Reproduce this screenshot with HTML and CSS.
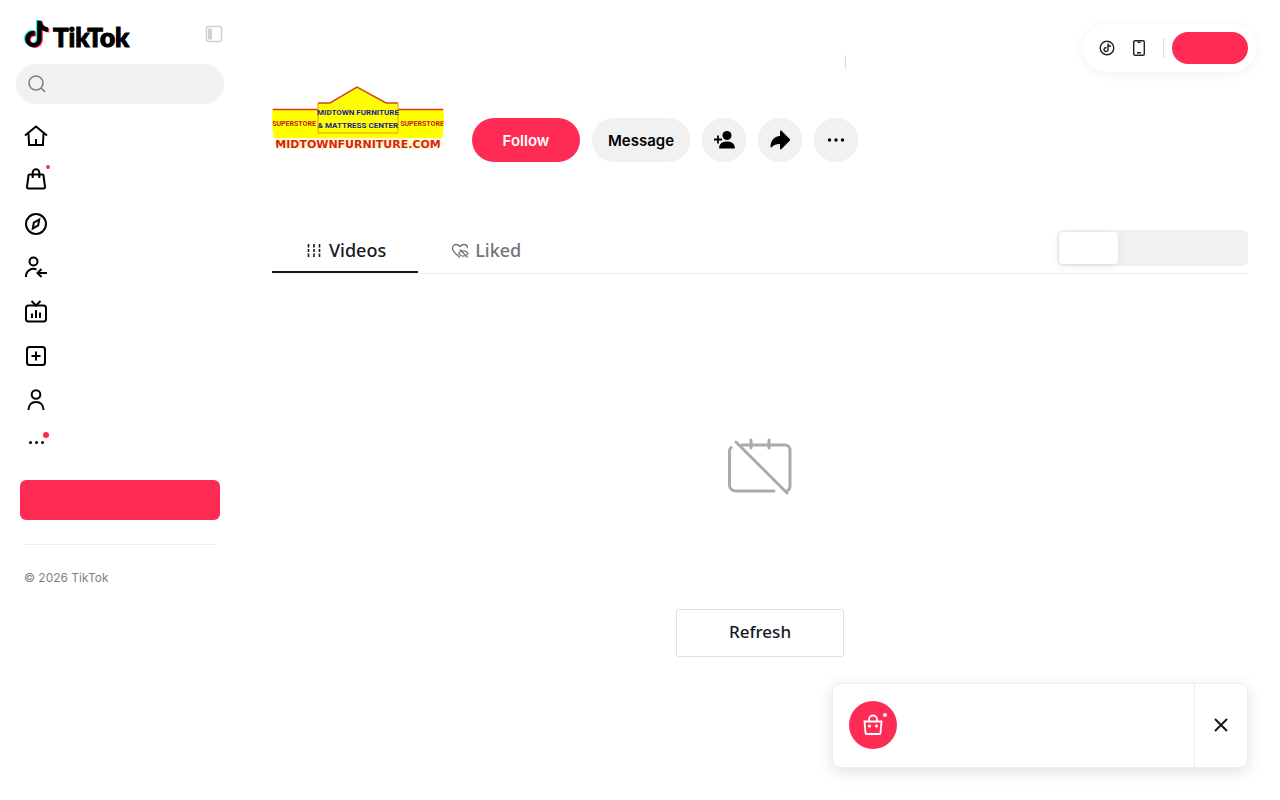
FILE: index.html
```html
<!doctype html>
<html lang="en">

<head>
    <meta charset="UTF-8" />
    <meta name="viewport" content="width=device-width, initial-scale=1.0" />
    <title>Midtown Furniture | TikTok</title>
    <link rel="stylesheet" href="styles.css">
</head>

<body>
    <div class="page">
        <aside class="sidebar">
            <div class="sidebar-top">
                <a class="logo" href="#" aria-label="TikTok">
                    <svg width="27" height="30" viewBox="0 0 27 30">
                        <defs>
                            <path id="note" d="M12.525.02c1.310-.02 2.610-.01 3.910-.02.080 1.530.630 3.090 1.750 4.170 1.120 1.110 2.700 1.620 4.240 1.790v4.030c-1.440-.05-2.890-.35-4.200-.97-.57-.26-1.100-.59-1.620-.93-.01 2.920.010 5.840-.02 8.750-.08 1.400-.54 2.790-1.350 3.940-1.310 1.920-3.580 3.170-5.910 3.210-1.430.080-2.860-.31-4.080-1.030-2.020-1.190-3.440-3.370-3.650-5.710-.02-.5-.03-1-.01-1.490.180-1.900 1.120-3.720 2.580-4.960 1.660-1.440 3.980-2.130 6.150-1.720.020 1.480-.04 2.960-.04 4.440-.99-.32-2.150-.23-3.020.370-.63.410-1.110 1.040-1.360 1.750-.21.510-.15 1.070-.14 1.610.240 1.640 1.820 3.020 3.500 2.870 1.120-.01 2.190-.66 2.770-1.610.190-.33.400-.67.410-1.060.100-1.790.060-3.570.070-5.360.010-4.030-.01-8.050.020-12.070z" />
                        </defs>
                        <use href="#note" fill="#25f4ee" transform="translate(-1.800 1) scale(1.100)" />
                        <use href="#note" fill="#fe2c55" transform="translate(.6 2.600) scale(1.100)" />
                        <use href="#note" fill="#000" transform="translate(-.6 1.800) scale(1.100)" />
                    </svg>
                    <span class="logo-text">TikT<span class="logo-o">o</span>k</span>
                </a>
                <button class="collapse" aria-label="Collapse sidebar">
                    <svg width="18" height="18" viewBox="0 0 18 18" fill="none" stroke="#d0d0d2">
                        <rect x="1.500" y="1.500" width="15" height="15" rx="2" stroke-width="1.500" />
                        <rect x="3" y="3.500" width="4" height="11" rx="1" fill="#d0d0d2" stroke="none" />
                    </svg>
                </button>
            </div>
            <label class="search">
                <svg width="20" height="20" viewBox="0 0 20 20" fill="none" stroke="#7f7f80" stroke-width="1.600">
                    <circle cx="9" cy="9" r="7" />
                    <path d="M14 14l4 4" />
                </svg>
                <input class="search-input" type="search" aria-label="Search">
            </label>
            <nav class="nav">
                <a class="nav-item" href="#" aria-label="For You">
                    <svg class="icon" viewBox="0 0 24 24">
                        <path d="M1 11.500L12 2.500l11 9M4.500 9.500l.6 11.500h13.800l.6-11.500M12 15v6" />
                    </svg>
                </a>
                <a class="nav-item" href="#" aria-label="Shop">
                    <svg class="icon" viewBox="0 0 24 24">
                        <path d="M5.500 6.500h13a1 1 0 0 1 1 1l1.500 11.500a1.500 1.500 0 0 1-1.500 1.500h-15A1.500 1.500 0 0 1 3 19L4.500 7.500a1 1 0 0 1 1-1zM8.700 10V4.500a3.300 3.300 0 0 1 6.600 0V10" />
                    </svg>
                    <span class="dot dot-shop"></span>
                </a>
                <a class="nav-item" href="#" aria-label="Explore">
                    <svg class="icon" viewBox="0 0 24 24">
                        <circle cx="12" cy="12" r="10" />
                        <path d="M15.200 7.500l-5.400 3.200-1 5.800 5.400-3.200z" />
                    </svg>
                </a>
                <a class="nav-item" href="#" aria-label="Following">
                    <svg class="icon" viewBox="0 0 24 24">
                        <circle cx="9.500" cy="5.500" r="4" />
                        <path d="M2 21v-.5a7.500 7.500 0 0 1 10.500-7M23 17H14M17.500 13l-4 4 4 4" />
                    </svg>
                </a>
                <a class="nav-item" href="#" aria-label="LIVE">
                    <svg class="icon" viewBox="0 0 24 24">
                        <rect x="2" y="5.500" width="20" height="16" rx="2.500" />
                        <path d="M7.500 1l4.500 4.500L16.500 1M8 13.500V18M12 10v8M16 12.500V18" />
                    </svg>
                </a>
                <a class="nav-item" href="#" aria-label="Upload">
                    <svg class="icon" viewBox="0 0 24 24">
                        <rect x="3" y="3" width="18" height="18" rx="2.500" />
                        <path d="M12 7.500v9M7.500 12h9" />
                    </svg>
                </a>
                <a class="nav-item" href="#" aria-label="Profile">
                    <svg class="icon" viewBox="0 0 24 24">
                        <circle cx="12" cy="6.500" r="4.300" />
                        <path d="M4.500 22c0-5 3-8 7.500-8s7.500 3 7.500 8" />
                    </svg>
                </a>
                <button class="nav-item nav-more" aria-label="More">
                    <svg class="icon icon-solid" viewBox="0 0 24 24">
                        <circle cx="6.500" cy="12.500" r="1.500" />
                        <circle cx="12.500" cy="12.500" r="1.500" />
                        <circle cx="18.500" cy="12.500" r="1.500" />
                    </svg>
                    <span class="dot dot-more"></span>
                </button>
            </nav>
            <button class="login" aria-label="Log in"></button>
            <footer class="copyright">© 2026 TikTok</footer>
        </aside>

        <main class="main">
            <header class="profile">
                <svg class="avatar" viewBox="0 0 172 172" role="img" aria-label="Midtown Furniture Superstore">
                    <defs>
                        <clipPath id="round">
                            <circle cx="86" cy="88" r="86" />
                        </clipPath>
                    </defs>
                    <g clip-path="url(#round)">
                        <rect y="77" width="172" height="29" fill="#ff0" />
                        <rect y="106" width="172" height="11" fill="#fffbd0" />
                        <path d="M0 77.500h46M126 77.500h46" stroke="#e0331b" stroke-width="1.500" />
                        <path d="M46 101V71h12l27-16 29 16h12v30z" fill="#ff0" />
                        <path d="M46 71h12l27-16 29 16h12" fill="none" stroke="#d8402c" stroke-width="1.500" />
                        <path d="M46 71v30h80V71" fill="none" stroke="#dfa000" />
                        <g text-anchor="middle">
                            <text class="sign sign-name" x="86" y="83">MIDTOWN FURNITURE</text>
                            <text class="sign sign-name" x="86" y="96">&amp; MATTRESS CENTER</text>
                            <text class="sign sign-side" x="22" y="94">SUPERSTORE</text>
                            <text class="sign sign-side" x="150" y="94">SUPERSTORE</text>
                            <text class="sign sign-url" x="86" y="116">MIDTOWNFURNITURE.COM</text>
                        </g>
                    </g>
                </svg>
                <div class="profile-info">
                    <div class="profile-title"><span class="title-divider"></span></div>
                    <div class="actions">
                        <button class="btn btn-follow">Follow</button>
                        <button class="btn">Message</button>
                        <button class="btn btn-round" aria-label="Suggested accounts">
                            <svg width="24" height="24" viewBox="0 0 24 24">
                                <circle cx="15" cy="7.500" r="4.500" />
                                <path d="M8 20.500c-.6 0-1-.4-.9-1 .5-4 3.400-6 7.900-6s7.400 2 7.900 6c.1.600-.3 1-.9 1z" />
                                <path d="M6 7.500v8M2 11.500h8" stroke="#000" stroke-width="1.800" />
                            </svg>
                        </button>
                        <button class="btn btn-round" aria-label="Share">
                            <svg width="24" height="24" viewBox="0 0 24 24">
                                <path d="M12 3.500c0-.8.900-1.200 1.500-.7l8.200 8.300c.5.500.5 1.200 0 1.700l-8.200 8.300c-.6.500-1.500.1-1.500-.7V16c-3.500-.1-6.200 1-8.300 3.300-.5.500-1.200.3-1.200-.5C2.700 12.500 6 8.300 12 8z" />
                            </svg>
                        </button>
                        <button class="btn btn-round" aria-label="More actions">
                            <svg width="24" height="24" viewBox="0 0 24 24">
                                <circle cx="5.500" cy="12" r="1.700" />
                                <circle cx="12" cy="12" r="1.700" />
                                <circle cx="18.500" cy="12" r="1.700" />
                            </svg>
                        </button>
                    </div>
                </div>
            </header>

            <div class="tabs-row">
                <div class="tabs">
                    <button class="tab tab-active">
                        <svg width="20" height="20" viewBox="0 0 20 20" fill="none" stroke="#161823" stroke-width="1.600">
                            <path d="M4.500 4v3.500M4.500 9v3M4.500 13.500V17M10 4v3.500M10 9v3M10 13.500V17M15.500 4v3.500M15.500 9v3M15.500 13.500V17" />
                        </svg>
                        Videos
                    </button>
                    <button class="tab">
                        <svg width="20" height="20" viewBox="0 0 20 20" fill="none" stroke="#73747b" stroke-width="1.300">
                            <path d="M10 17.500l-1.500-1.200C5 13.500 2.500 11 2.500 8.300 2.500 6 4.200 4.500 6.200 4.500c1.500 0 2.800.8 3.800 2 1-1.200 2.300-2 3.800-2 2 0 3.700 1.500 3.700 3.800" />
                            <path d="M8.700 13.500c1-1.800 2.500-2.700 4.600-2.700s3.700.9 4.700 2.700c-1 1.800-2.600 2.700-4.700 2.700s-3.600-.9-4.600-2.700zM10 9.500l7.500 8" />
                        </svg>
                        Liked
                    </button>
                </div>
                <div class="sort">
                    <button class="sort-item sort-active" aria-label="Latest"></button>
                    <button class="sort-item" aria-label="Popular"></button>
                    <button class="sort-item" aria-label="Oldest"></button>
                </div>
            </div>

            <section class="empty">
                <svg width="72" height="72" viewBox="0 0 72 72" fill="none" stroke="#aaabaf" stroke-width="3" stroke-linecap="round">
                    <path d="M18 14h43a5 5 0 0 1 5 5v36c0 3-1 4-3 5M7 16.500c-1 1-1.500 2-1.500 3.500v34a6 6 0 0 0 6 6H50" />
                    <path d="M27 9v8M45 9v8" />
                    <path d="M12 11l51 51" />
                </svg>
                <button class="refresh">Refresh</button>
            </section>
        </main>
    </div>

    <div class="topbar">
        <button class="topbar-btn" aria-label="Get coins">
            <svg width="16" height="16" viewBox="0 0 16 16" fill="#222">
                <circle cx="8" cy="8" r="6.800" fill="none" stroke="#222" stroke-width="1.400" />
                <use href="#note" transform="translate(3.800 3.600) scale(.36)" />
            </svg>
        </button>
        <button class="topbar-btn" aria-label="Get app">
            <svg width="16" height="16" viewBox="0 0 16 16" fill="none" stroke="#222" stroke-width="1.400">
                <rect x="2.700" y=".7" width="10.600" height="14.600" rx="1.300" />
                <path d="M6.500 2.300h3M6 12.700h4" />
            </svg>
        </button>
        <span class="topbar-divider"></span>
        <button class="topbar-login" aria-label="Log in"></button>
    </div>

    <div class="toast">
        <div class="toast-body">
            <svg width="48" height="48" viewBox="0 0 48 48" fill="none" stroke="#fff" stroke-width="1.800">
                <circle cx="24" cy="24" r="24" fill="#fe2c55" stroke="none" />
                <path d="M15.500 20.500h17l-1 11.500a1 1 0 0 1-1 1h-13a1 1 0 0 1-1-1zM20 20v-1.500a4 4 0 0 1 8 0V20" />
                <g fill="#fff" stroke="none">
                    <circle cx="20.500" cy="25" r="1.600" />
                    <circle cx="27.500" cy="25" r="1.600" />
                    <circle cx="36" cy="14" r="2" />
                </g>
            </svg>
        </div>
        <button class="toast-close" aria-label="Close">
            <svg width="16" height="16" viewBox="0 0 16 16" fill="none" stroke="#161823" stroke-width="2">
                <path d="M2 2l12 12M14 2L2 14" />
            </svg>
        </button>
    </div>
</body>

</html>
```

FILE: styles.css
```css
* {
    box-sizing: border-box;
}

body {
    margin: 0;
    font-family: "Noto Sans", Arial, sans-serif;
    color: #161823;
    background-color: #fff;
}

button {
    padding: 0;
    border: none;
    background: none;
    font-family: inherit;
    color: inherit;
    cursor: pointer;
}

svg {
    display: block;
    flex-shrink: 0;
}

.page {
    display: flex;
    min-height: 100vh;
}

.sidebar {
    width: 240px;
    flex-shrink: 0;
    padding: 16px;
}

.sidebar-top {
    display: flex;
    align-items: center;
    justify-content: space-between;
    height: 36px;
    padding: 0 1px 0 8px;
}

.logo {
    display: flex;
    align-items: center;
    gap: 2px;
    color: #000;
    text-decoration: none;
}

.logo-text {
    padding-top: 6px;
    font-family: Lato, sans-serif;
    font-size: 26px;
    font-weight: 900;
    line-height: 28px;
    -webkit-text-stroke: 1px #000;
}

.logo-o {
    text-shadow: -1px 0 #25f4ee, 1px 0 #fe2c55;
}

.search {
    display: flex;
    align-items: center;
    gap: 8px;
    height: 40px;
    margin-top: 12px;
    padding: 0 11px;
    border-radius: 20px;
    background-color: #f1f1f2;
}

.search-input {
    flex: 1;
    min-width: 0;
    border: none;
    outline: none;
    background: none;
    font-family: inherit;
    font-size: 16px;
}

.nav {
    display: flex;
    flex-direction: column;
    margin-top: 10px;
}

.nav-item {
    position: relative;
    display: flex;
    align-items: center;
    height: 44px;
    padding: 0 8px;
}

.nav-more {
    height: 40px;
}

.icon {
    width: 24px;
    height: 24px;
    fill: none;
    stroke: #000;
    stroke-width: 2;
}

.icon-solid {
    fill: #000;
    stroke: none;
}

.dot {
    position: absolute;
    border-radius: 50%;
    background-color: #fe2c55;
}

.dot-shop {
    top: 7px;
    left: 30px;
    width: 4px;
    height: 4px;
}

.dot-more {
    top: 10px;
    left: 27px;
    width: 6px;
    height: 6px;
}

.login {
    display: block;
    width: 200px;
    height: 40px;
    margin: 18px auto 24px;
    border-radius: 6px;
    background-color: #fe2c55;
}

.copyright {
    margin: 0 8px;
    padding-top: 24px;
    border-top: 1px solid #ededee;
    font-family: Inter, sans-serif;
    font-size: 12px;
    line-height: 18px;
    color: #7f7f80;
}

.main {
    flex: 1;
    min-width: 0;
    padding: 32px;
}

.profile {
    display: flex;
    gap: 28px;
}

.avatar {
    width: 172px;
    height: 172px;
}

.profile-info {
    flex: 1;
    padding-top: 16px;
}

.profile-title {
    display: flex;
    align-items: center;
    height: 28px;
    margin-bottom: 42px;
}

.title-divider {
    width: 1px;
    height: 14px;
    margin-left: 373px;
    background-color: #dcdcde;
}

.actions {
    display: flex;
    gap: 12px;
}

.btn {
    display: flex;
    align-items: center;
    justify-content: center;
    height: 44px;
    padding: 0 16px;
    border-radius: 22px;
    background-color: #f1f1f2;
    font-family: Inter, sans-serif;
    font-size: 15px;
    font-weight: 600;
    color: #000;
}

.btn-follow {
    width: 108px;
    background-color: #fe2c55;
    color: #fff;
}

.btn-round {
    width: 44px;
    padding: 0;
}

.tabs-row {
    display: flex;
    justify-content: space-between;
    align-items: flex-start;
    height: 48px;
    margin-top: 22px;
    border-bottom: 1px solid #ededee;
}

.tabs {
    display: flex;
}

.tab {
    display: flex;
    align-items: center;
    gap: 5px;
    height: 47px;
    padding: 2px 32px 0;
    border-bottom: 2px solid transparent;
    font-size: 18px;
    font-weight: 500;
    color: #73747b;
}

.tab-active {
    border-color: #161823;
    color: #161823;
}

.sort {
    display: flex;
    width: 191px;
    height: 36px;
    margin-top: 4px;
    padding: 2px;
    border-radius: 6px;
    background-color: #f1f1f2;
}

.sort-item {
    flex: 1;
    border-radius: 4px;
}

.sort-active {
    flex: 0 0 59px;
    background-color: #fff;
    box-shadow: 0 2px 8px rgba(0, 0, 0, 0.08);
}

.empty {
    display: flex;
    flex-direction: column;
    align-items: center;
    padding-top: 157px;
}

.refresh {
    width: 168px;
    height: 48px;
    margin-top: 106px;
    padding-bottom: 4px;
    border: 1px solid #e0e0e2;
    border-radius: 3px;
    font-size: 17px;
    font-weight: 500;
}

.topbar {
    position: fixed;
    top: 24px;
    right: 24px;
    display: flex;
    align-items: center;
    height: 48px;
    padding: 0 8px 0 16px;
    border-radius: 24px;
    background-color: #fff;
    box-shadow: 0 2px 12px rgba(0, 0, 0, 0.06);
}

.topbar-btn {
    margin-right: 16px;
}

.topbar-divider {
    width: 1px;
    height: 20px;
    margin-right: 8px;
    background-color: #dcdcde;
}

.topbar-login {
    width: 76px;
    height: 32px;
    border-radius: 16px;
    background-color: #fe2c55;
}

.toast {
    position: fixed;
    right: 32px;
    bottom: 32px;
    display: flex;
    width: 416px;
    height: 85px;
    border: 1px solid #ededee;
    border-radius: 8px;
    background-color: #fff;
    box-shadow: 0 4px 16px rgba(0, 0, 0, 0.12);
}

.toast-body {
    display: flex;
    flex: 1;
    align-items: center;
    padding: 0 16px 2px;
}

.toast-close {
    display: flex;
    align-items: center;
    justify-content: center;
    width: 53px;
    padding-bottom: 2px;
    border-left: 1px solid #ededee;
}

.sign {
    font-family: Roboto, sans-serif;
    font-weight: 700;
}

.sign-name {
    font-size: 8px;
    fill: #1a1a9c;
}

.sign-side {
    font-size: 7px;
    fill: #c8201a;
}

.sign-url {
    font-family: "DejaVu Sans", sans-serif;
    font-size: 11px;
    fill: #d92312;
}
```
